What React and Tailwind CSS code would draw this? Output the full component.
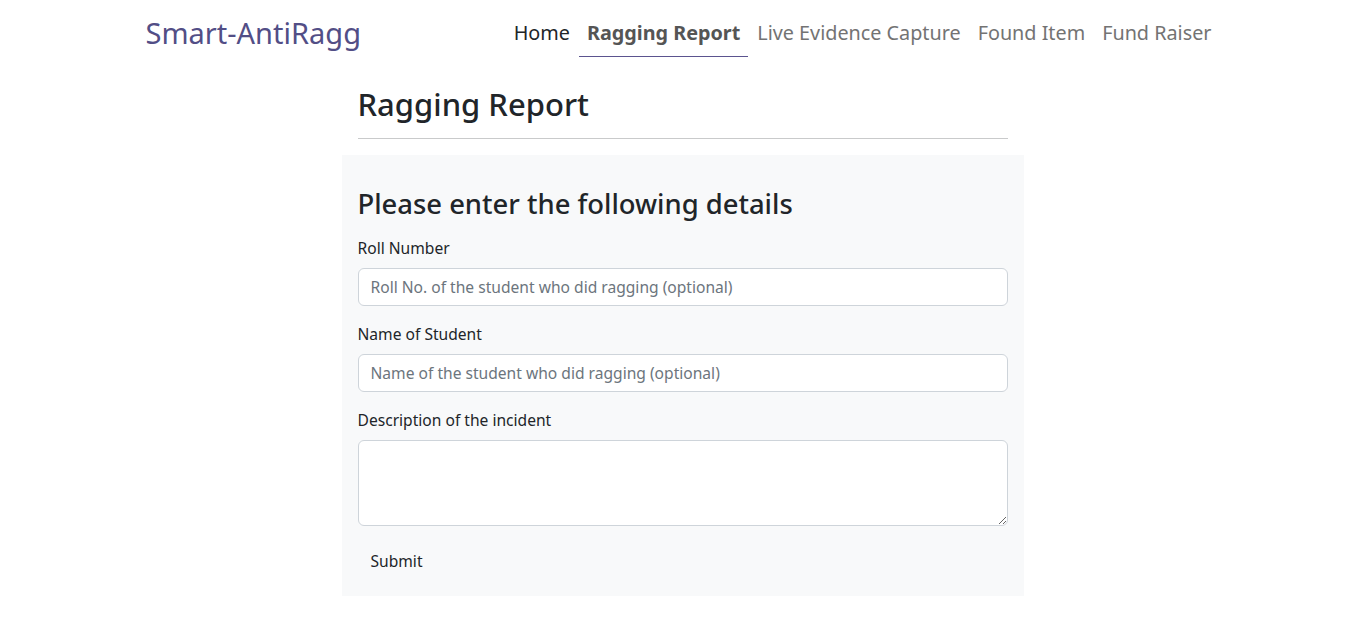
export default function App() {
  const font = { fontFamily: "'Noto Sans', Lato, sans-serif" };
  return (
    <div className="min-h-[629px] bg-white text-[#212529]" style={font}>
      <nav className="pt-[10px]">
        <div className="w-[1074px] mx-auto flex items-start justify-between">
          <a className="text-[29px] leading-[46px] text-[#524e86] no-underline">Smart-AntiRagg</a>
          <ul className="flex items-start gap-[1px] text-[19.8px] leading-[30px]">
            <li><a className="block px-2 py-2 text-[#212529]">Home</a></li>
            <li><a className="block px-2 py-2 font-bold text-[#555555] border-b border-[#5b548f]">Ragging Report</a></li>
            <li><a className="block px-2 py-2 text-[#737373]">Live Evidence Capture</a></li>
            <li><a className="block px-2 py-2 text-[#737373]">Found Item</a></li>
            <li><a className="block px-2 py-2 text-[#737373]">Fund Raiser</a></li>
          </ul>
        </div>
      </nav>
      <main className="w-[682px] mx-auto">
        <div className="px-4 pt-[28px]">
          <h2 className="text-[31px] leading-[38px] font-medium">Ragging Report</h2>
          <hr className="mt-[15px] mb-4 border-t border-[#c9cacb]" />
        </div>
        <form className="bg-[#f8f9fa] px-4 pt-[32px] pb-4">
          <h3 className="text-[27.4px] leading-[34px] font-medium mb-[15px]">Please enter the following details</h3>
          <div className="mb-4">
            <label className="block text-[15.6px] leading-6 mb-2">Roll Number</label>
            <input
              className="block w-full h-[38px] bg-white border border-[#ced4da] rounded-[6px] px-3 text-[15.6px] placeholder:text-[#6c757d] outline-none"
              placeholder="Roll No. of the student who did ragging (optional)"
            />
          </div>
          <div className="mb-4">
            <label className="block text-[15.6px] leading-6 mb-2">Name of Student</label>
            <input
              className="block w-full h-[38px] bg-white border border-[#ced4da] rounded-[6px] px-3 text-[15.6px] placeholder:text-[#6c757d] outline-none"
              placeholder="Name of the student who did ragging (optional)"
            />
          </div>
          <div className="mb-4">
            <label className="block text-[15.6px] leading-6 mb-2">Description of the incident</label>
            <textarea
              rows={3}
              className="block w-full h-[86px] bg-white border border-[#ced4da] rounded-[6px] px-3 py-[6px] text-[15.6px] outline-none"
            />
          </div>
          <button type="button" className="h-[38px] px-[13px] text-[15.6px] leading-6 text-[#212529] bg-transparent">Submit</button>
        </form>
      </main>
    </div>
  );
}
